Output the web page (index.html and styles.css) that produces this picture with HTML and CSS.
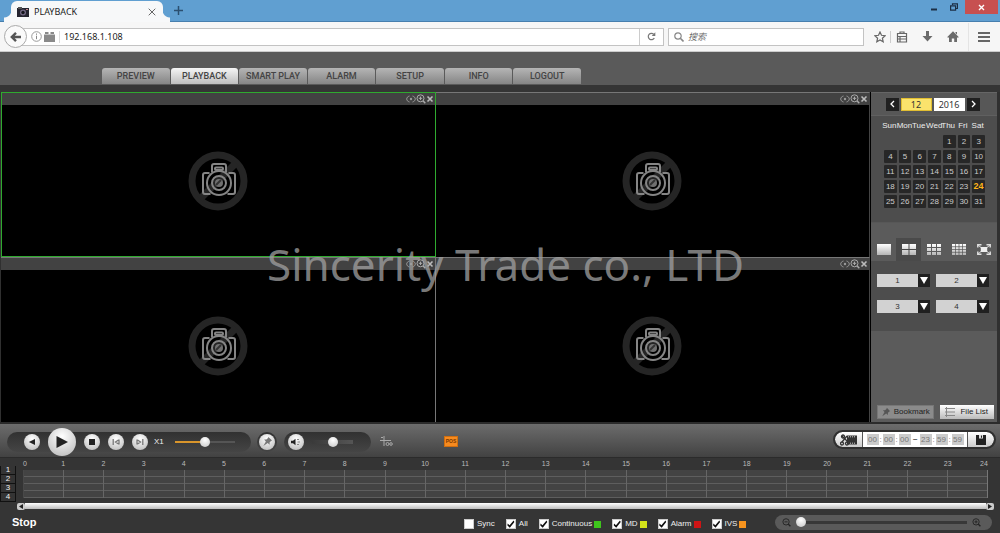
FILE: index.html
```html
<!DOCTYPE html>
<html lang="en">
<head>
<meta charset="utf-8">
<title>PLAYBACK</title>
<link rel="stylesheet" href="styles.css">
</head>
<body>
<svg class="defs" aria-hidden="true">
  <defs>
    <linearGradient id="shine" x1="0" y1="0" x2="0" y2="1"><stop offset="0" stop-color="#fff"/><stop offset="1" stop-color="#b5b5b5"/></linearGradient>
  </defs>
  <symbol id="camera" viewBox="0 0 60 60">
    <circle cx="30" cy="30" r="26" fill="none" stroke="#252525" stroke-width="7"/>
    <path d="M12 48L48 12" stroke="#252525" stroke-width="7"/>
    <g fill="none" stroke="#858585" stroke-width="2">
      <path d="M21.500 22H17Q15 22 15 24V41Q15 43 17 43H22.500M40.500 22H45Q47 22 47 24V41Q47 43 45 43H39.500"/>
      <path d="M24 21.500V15Q24 13 26 13H36Q38 13 38 15V21.500"/>
      <rect x="27" y="16.500" width="8" height="2.500" rx="1"/>
      <circle cx="31" cy="32" r="12"/>
      <circle cx="31" cy="32" r="7"/>
    </g>
    <circle cx="31" cy="32" r="4" fill="#707070"/>
    <path d="M28 34l5-5" stroke="#333" stroke-width="2"/>
  </symbol>
  <symbol id="eye" viewBox="0 0 10 10"><path d="M3.500 2C-.2 3 -.2 7 3.500 8M6.500 2C10.200 3 10.200 7 6.500 8" fill="none" stroke="#999"/><circle cx="5" cy="5" r="1.200" fill="#999"/></symbol>
  <symbol id="zoomin" viewBox="0 0 10 10"><g fill="none" stroke="currentColor"><circle cx="4.500" cy="4.300" r="3.500"/><path d="M7 6.800L9.300 9.200" stroke-width="1.500"/><path d="M2.800 4.300h3.400M4.500 2.600v3.400"/></g></symbol>
  <symbol id="zoomout" viewBox="0 0 10 10"><g fill="none" stroke="currentColor"><circle cx="4.500" cy="4.300" r="3.500"/><path d="M7 6.800L9.300 9.200" stroke-width="1.500"/><path d="M2.800 4.300h3.400"/></g></symbol>
  <symbol id="cross" viewBox="0 0 8 8"><path d="M1.500 1.500l5 5M6.500 1.500l-5 5" stroke="#bbb" stroke-width="1.600"/></symbol>
  <symbol id="pin" viewBox="0 0 12 12"><path d="M7 1l4 4-1.200.4-1.600 1.800.2 2.300-2.200-1.800L1.500 11 4.200 6 2.300 3.800l2.500.1L6.600 2.300z" fill="currentColor"/></symbol>
</svg>

<div class="browser">
  <div class="tabstrip">
    <div class="tab">
      <svg class="favicon" viewBox="0 0 12 10"><rect y="1" width="12" height="9" fill="#25242f"/><rect width="4" height="2" x="1" fill="#555"/><circle cx="6" cy="5.500" r="3" fill="#746a85"/><circle cx="6" cy="5.500" r="1.700" fill="#15151c"/><rect x="9" y="2" width="2" height="1" fill="#c88"/></svg>
      <span class="tab-title">PLAYBACK</span>
      <button class="plain" aria-label="Close tab"><svg width="8" height="8" viewBox="0 0 8 8"><path d="M.7.7l6.600 6.600M7.300.7L.7 7.300" stroke="#666"/></svg></button>
    </div>
    <button class="plain newtab" aria-label="New tab"><svg width="9" height="9" viewBox="0 0 9 9"><path d="M4.500 0v9M0 4.500h9" stroke="#2b4f70" stroke-width="1.500"/></svg></button>
    <div class="window-buttons">
      <button class="plain" aria-label="Minimize"><svg width="7" height="8" viewBox="0 0 7 8"><path d="M0 6.500h6" stroke="#1c2f45" stroke-width="2"/></svg></button>
      <button class="plain" aria-label="Restore"><svg width="8" height="8" viewBox="0 0 8 8"><path d="M2.500 2V.8h5v4.700H6M.6 2.800h5v4.400h-5z" fill="none" stroke="#1c2f45" stroke-width="1.200"/></svg></button>
      <button class="plain close" aria-label="Close"><svg width="7" height="7" viewBox="0 0 7 7"><path d="M1 1l5 5M6 1L1 6" stroke="#fff" stroke-width="1.400"/></svg></button>
    </div>
  </div>
  <div class="toolbar">
    <button class="plain back" aria-label="Back"><svg width="12" height="12" viewBox="0 0 12 12"><path d="M11 6H2.500M6 1.800L1.800 6 6 10.200" fill="none" stroke="#555" stroke-width="2.400"/></svg></button>
    <div class="address">
      <svg width="11" height="11" viewBox="0 0 11 11"><circle cx="5.500" cy="5.500" r="4.800" fill="none" stroke="#999"/><path d="M5.500 4.700v3.500M5.500 2.500v1.300" stroke="#888"/></svg>
      <svg width="11" height="10" viewBox="0 0 11 10"><path d="M0 2.500h11V10H0zM1 0h3.500v2H1zM6.500 0H10v2H6.500z" fill="#8a8a8a"/></svg>
      <input class="url" aria-label="Address" value="192.168.1.108">
      <button class="plain reload" aria-label="Reload"><svg width="9" height="9" viewBox="0 0 9 9"><path d="M7.300 6A3.200 3.200 0 1 1 6.800 2.300" fill="none" stroke="#777" stroke-width="1.200"/><path d="M8.300.3v3.700H4.700z" fill="#777"/></svg></button>
    </div>
    <div class="search">
      <svg width="10" height="10" viewBox="0 0 10 10"><circle cx="4" cy="4" r="3.200" fill="none" stroke="#888" stroke-width="1.200"/><path d="M6.300 6.300L9.500 9.500" stroke="#888" stroke-width="1.600"/></svg>
      <input aria-label="Search" placeholder="搜索">
    </div>
    <div class="tools">
      <button class="plain" aria-label="Bookmark page"><svg width="12" height="12" viewBox="0 0 12 12"><path d="M6 1l1.500 3.300 3.600.4-2.700 2.500.8 3.600L6 9l-3.200 1.800.8-3.600L.9 4.700l3.600-.4z" fill="none" stroke="#666" stroke-width="1.200"/></svg></button>
      <button class="plain split" aria-label="Library"><svg width="12" height="12" viewBox="0 0 12 12"><path d="M1.500 2.500h9v8.500h-9zM4 2.500V1h4v1.500M1.500 5.500h9M1.500 8h9M4 5v6" fill="none" stroke="#666" stroke-width="1.200"/></svg></button>
      <button class="plain" aria-label="Downloads"><svg width="11" height="11" viewBox="0 0 11 11"><path d="M4 0h3v5h3.500l-5 5.500-5-5.500H4z" fill="#6b6b6b"/></svg></button>
      <button class="plain" aria-label="Home"><svg width="12" height="11" viewBox="0 0 12 11"><path d="M6 .3L11.700 6l-.8.900L10 6v5H7.200V7.500H4.800V11H2V6l-.9.900L.3 6zM8.500 1H10v2.500L8.500 2z" fill="#6b6b6b"/></svg></button>
      <button class="plain menu" aria-label="Menu"><svg width="12" height="10" viewBox="0 0 12 10"><path d="M0 1h12M0 5h12M0 9h12" stroke="#666" stroke-width="1.800"/></svg></button>
    </div>
  </div>
</div>

<header class="header">
  <nav class="nav">
    <a href="#preview">PREVIEW</a><a href="#playback" class="active">PLAYBACK</a><a href="#smart">SMART PLAY</a><a href="#alarm">ALARM</a><a href="#setup">SETUP</a><a href="#info">INFO</a><a href="#logout">LOGOUT</a>
  </nav>
</header>

<main class="main">
  <section class="videos" aria-label="Video channels">
    <div class="video selected">
      <div class="video-bar"><svg><use href="#eye"/></svg><svg><use href="#zoomin"/></svg><svg class="x"><use href="#cross"/></svg></div>
      <div class="video-body"><svg class="camera"><use href="#camera"/></svg></div>
    </div>
    <div class="video">
      <div class="video-bar"><svg><use href="#eye"/></svg><svg><use href="#zoomin"/></svg><svg class="x"><use href="#cross"/></svg></div>
      <div class="video-body"><svg class="camera"><use href="#camera"/></svg></div>
    </div>
    <div class="video">
      <div class="video-bar"><svg><use href="#eye"/></svg><svg><use href="#zoomin"/></svg><svg class="x"><use href="#cross"/></svg></div>
      <div class="video-body"><svg class="camera"><use href="#camera"/></svg></div>
    </div>
    <div class="video">
      <div class="video-bar"><svg><use href="#eye"/></svg><svg><use href="#zoomin"/></svg><svg class="x"><use href="#cross"/></svg></div>
      <div class="video-body"><svg class="camera"><use href="#camera"/></svg></div>
    </div>
  </section>

  <aside class="sidebar">
    <div class="date-head">
      <button class="plain step" aria-label="Previous month"><svg width="5" height="8" viewBox="0 0 5 8"><path d="M4 1L1 4l3 3" fill="none" stroke="#fff" stroke-width="1.300"/></svg></button>
      <input class="month" aria-label="Month" value="12">
      <input aria-label="Year" value="2016">
      <button class="plain step" aria-label="Next month"><svg width="5" height="8" viewBox="0 0 5 8"><path d="M1 1l3 3-3 3" fill="none" stroke="#fff" stroke-width="1.300"/></svg></button>
    </div>
    <div class="calendar-panel">
      <table class="calendar">
        <thead><tr><th>Sun</th><th>Mon</th><th>Tue</th><th>Wed</th><th>Thu</th><th>Fri</th><th>Sat</th></tr></thead>
        <tbody>
          <tr><td class="empty" colspan="4"></td><td>1</td><td>2</td><td>3</td></tr>
          <tr><td>4</td><td>5</td><td>6</td><td>7</td><td>8</td><td>9</td><td>10</td></tr>
          <tr><td>11</td><td>12</td><td>13</td><td>14</td><td>15</td><td>16</td><td>17</td></tr>
          <tr><td>18</td><td>19</td><td>20</td><td>21</td><td>22</td><td>23</td><td class="today">24</td></tr>
          <tr><td>25</td><td>26</td><td>27</td><td>28</td><td>29</td><td>30</td><td>31</td></tr>
        </tbody>
      </table>
    </div>
    <div class="layouts">
      <button class="plain" aria-label="Single view"><svg width="14" height="11" viewBox="0 0 14 11"><rect width="14" height="11" fill="url(#shine)"/></svg></button>
      <button class="plain on" aria-label="Four views"><svg width="14" height="11" viewBox="0 0 14 11"><path d="M0 0h6.500v5H0zM7.500 0H14v5H7.500zM0 6h6.500v5H0zM7.500 6H14v5H7.500z" fill="url(#shine)"/></svg></button>
      <button class="plain" aria-label="Nine views"><svg width="14" height="11" viewBox="0 0 14 11"><path d="M0 0h4v3H0zM5 0h4v3H5zM10 0h4v3h-4zM0 4h4v3H0zM5 4h4v3H5zM10 4h4v3h-4zM0 8h4v3H0zM5 8h4v3H5zM10 8h4v3h-4z" fill="url(#shine)"/></svg></button>
      <button class="plain" aria-label="Sixteen views"><svg width="14" height="11" viewBox="0 0 14 11"><rect width="14" height="11" fill="url(#shine)"/><path d="M3.500 0v11M7 0v11M10.500 0v11M0 2.700h14M0 5.500h14M0 8.300h14" stroke="#555" stroke-width=".7"/></svg></button>
      <button class="plain" aria-label="Full screen"><svg width="14" height="11" viewBox="0 0 14 11"><path d="M.8 3.500V.8H4.500M9.500.8h3.700v2.700M.8 7.500v2.700h3.700M9.500 10.200h3.700V7.500" fill="none" stroke="#ddd" stroke-width="1.500"/><path d="M1 1l3 2.500M13 1l-3 2.500M1 10l3-2.500M13 10l-3-2.500" stroke="#ddd"/><rect x="3.800" y="3" width="6.400" height="5" fill="#eee"/></svg></button>
    </div>
    <div class="channels">
      <div class="pick"><select aria-label="Window 1"><option>1</option></select></div>
      <div class="pick"><select aria-label="Window 2"><option>2</option></select></div>
      <div class="pick"><select aria-label="Window 3"><option>3</option></select></div>
      <div class="pick"><select aria-label="Window 4"><option>4</option></select></div>
    </div>
    <div class="side-actions">
      <button class="bookmark"><svg width="10" height="10"><use href="#pin"/></svg>Bookmark</button>
      <button class="filelist"><svg width="10" height="10" viewBox="0 0 10 10"><path d="M1.500 0v10M0 1.500h10M0 5h10M0 8.500h10" stroke="#888"/></svg>File List</button>
    </div>
  </aside>
  <div class="watermark">Sincerity Trade co., LTD</div>
</main>

<section class="controls" aria-label="Playback controls">
  <div class="pill transport">
    <button class="round" aria-label="Reverse"><svg width="8" height="8" viewBox="0 0 8 8"><path d="M7 1v6L.8 4z" fill="#222"/></svg></button>
    <button class="round play" aria-label="Play"><svg width="14" height="14" viewBox="0 0 14 14"><path d="M1.500 1v12L13 7z" fill="#222"/></svg></button>
    <button class="round" aria-label="Stop"><svg width="6" height="6"><rect width="6" height="6" fill="#222"/></svg></button>
    <button class="round" aria-label="Previous frame"><svg width="8" height="8" viewBox="0 0 8 8"><path d="M1.200 1v6M7 1.500v5M6.500 2L3.500 4l3 2" fill="none" stroke="#777" stroke-width="1.300"/></svg></button>
    <button class="round" aria-label="Next frame"><svg width="8" height="8" viewBox="0 0 8 8"><path d="M6.800 1v6M1 1.500v5M1.500 2l3 2-3 2" fill="none" stroke="#777" stroke-width="1.300"/></svg></button>
    <label for="speed">X1</label>
    <input id="speed" class="speed" type="range" value="50">
  </div>
  <div class="pill pinwrap"><button class="round" aria-label="Pin"><svg width="11" height="11"><use href="#pin"/></svg></button></div>
  <div class="pill volume">
    <button class="round" aria-label="Mute"><svg width="10" height="8" viewBox="0 0 10 8"><path d="M0 2.800h2L4.500.7v6.600L2 5.200H0z" fill="#222"/><path d="M6 1.500h2M6.500 4H9M6 6.500h2" stroke="#888"/></svg></button>
    <input class="vol" type="range" aria-label="Volume" value="50">
  </div>
  <button class="plain rule" aria-label="Display rules"><svg width="13" height="11" viewBox="0 0 13 11"><path d="M0 4.500h11M4 0v10M1 1.500h2" fill="none" stroke="#aaa"/><circle cx="7.500" cy="8" r="1.500" fill="none" stroke="#aaa"/><circle cx="11" cy="8" r="1.300" fill="none" stroke="#aaa"/></svg></button>
  <button class="pos">POS</button>
  <div class="clip">
    <button class="plain" aria-label="Clip"><svg width="18" height="12" viewBox="0 0 18 12"><path d="M7 1.500h10v9H7z" fill="#333"/><path d="M8 2.800h8M8 9.200h8" stroke="#ccc" stroke-dasharray="1 1"/><g fill="none" stroke="#333" stroke-width="1.300"><path d="M2 2l6 6M7 2L2 8"/><circle cx="2" cy="9.500" r="1.500"/><circle cx="7" cy="9.500" r="1.500"/><circle cx="3" cy="2.500" r="1.500"/></g></svg></button>
    <div class="times">
      <input aria-label="Start hour" value="00"><i>:</i><input aria-label="Start minute" value="00"><i>:</i><input aria-label="Start second" value="00"><b>~</b><input aria-label="End hour" value="23"><i>:</i><input aria-label="End minute" value="59"><i>:</i><input aria-label="End second" value="59">
    </div>
    <button class="plain save" aria-label="Save clip"><svg width="10" height="10" viewBox="0 0 10 10"><path d="M0 0h10v10H0z" fill="#222"/><path d="M3 0h4v3.500H3z" fill="#ddd"/><path d="M5.500.5v2.300" stroke="#222"/></svg></button>
  </div>
</section>

<section class="timeline" aria-label="Timeline">
  <ol class="rows"><li>1</li><li>2</li><li>3</li><li>4</li></ol>
  <div class="track">
    <div class="hours">
      <span class="first">0</span><span>1</span><span>2</span><span>3</span><span>4</span><span>5</span><span>6</span><span>7</span><span>8</span><span>9</span><span>10</span><span>11</span><span>12</span><span>13</span><span>14</span><span>15</span><span>16</span><span>17</span><span>18</span><span>19</span><span>20</span><span>21</span><span>22</span><span>23</span><span class="last">24</span>
    </div>
    <div class="grid">
      <div></div><div></div><div></div><div></div><div></div><div></div><div></div><div></div><div></div><div></div><div></div><div></div><div></div><div></div><div></div><div></div><div></div><div></div><div></div><div></div><div></div><div></div><div></div><div></div>
    </div>
  </div>
</section>
<div class="scroll">
  <button aria-label="Scroll left"><svg width="4" height="5" viewBox="0 0 4 5"><path d="M4 0v5L0 2.500z" fill="#222"/></svg></button>
  <div class="scroll-thumb"></div>
  <button aria-label="Scroll right"><svg width="4" height="5" viewBox="0 0 4 5"><path d="M0 0v5l4-2.500z" fill="#222"/></svg></button>
</div>

<footer class="footer">
  <strong>Stop</strong>
  <div class="filters">
    <label><input type="checkbox">Sync</label>
    <label><input type="checkbox" checked>All</label>
    <label><input type="checkbox" checked>Continuous<span class="swatch green"></span></label>
    <label><input type="checkbox" checked>MD<span class="swatch yellow"></span></label>
    <label><input type="checkbox" checked>Alarm<span class="swatch red"></span></label>
    <label><input type="checkbox" checked>IVS<span class="swatch orange"></span></label>
  </div>
  <div class="zoom">
    <svg width="9" height="9"><use href="#zoomout"/></svg>
    <input type="range" aria-label="Timeline zoom" value="0">
    <svg width="9" height="9"><use href="#zoomin"/></svg>
  </div>
</footer>
</body>
</html>
```

FILE: styles.css
```css
* { box-sizing: border-box; }
body {
  margin: 0;
  min-height: 100vh;
  display: flex;
  flex-direction: column;
  background: #353535;
  color: #eee;
  font: 8px/10px "Liberation Sans", Arial, sans-serif;
}
svg { display: block; flex: none; }
.defs { position: absolute; width: 0; height: 0; }
button, input, select { font: inherit; color: inherit; margin: 0; padding: 0; border: 0; border-radius: 0; min-width: 0; }
.plain { background: none; display: flex; align-items: center; justify-content: center; }

/* Browser window */
.tabstrip { display: flex; height: 22px; background: #609fd1; border-bottom: 1px solid #477fae; }
.tab {
  display: flex; align-items: center; gap: 5px;
  width: 152px; height: 21px; margin: 1px 0 0 11px; padding: 0 7px 0 6px;
  background: #f7f8f9; border-radius: 6px 6px 0 0;
  position: relative;
}
.tab::before, .tab::after {
  content: ""; position: absolute; bottom: 0; width: 7px; height: 12px;
}
.tab::before { right: 100%; background: radial-gradient(circle at 0 0, transparent 7px, #f7f8f9 8px); }
.tab::after { left: 100%; background: radial-gradient(circle at 100% 0, transparent 7px, #f7f8f9 8px); }
.favicon { width: 12px; height: 10px; }
.tab-title { flex: 1; color: #222; font: 9px/12px "Noto Sans", sans-serif; }
.newtab { margin-left: 11px; }
.window-buttons { display: flex; margin-left: auto; height: 14px; gap: 12px; padding-right: 2px; }
.window-buttons .close { width: 33px; background: #c75050; margin-left: -5px; }
.toolbar {
  display: flex; align-items: center; height: 30px; padding: 0 10px 0 4px;
  background: #f6f6f6; border-bottom: 1px solid #ccc;
}
.back { width: 23px; height: 23px; border: 1px solid #aaa; border-radius: 50%; background: #fafafa; z-index: 1; }
.address, .search { display: flex; align-items: center; height: 18px; background: #fff; border: 1px solid #c3c3c3; color: #222; }
.address { flex: 1; margin-left: -5px; padding-left: 8px; gap: 2px; font: 9px/12px "Noto Sans", sans-serif; }
.url { flex: 1; height: 12px; margin-left: 2px; padding-left: 4px; border-left: 1px solid #ddd; }
.reload { width: 24px; height: 16px; border-left: 1px solid #ccc; }
.search { width: 196px; margin-left: 4px; padding: 0 5px; gap: 4px; font: italic 9px/12px "Noto Sans", "Noto Sans CJK SC", sans-serif; }
.search input { flex: 1; background: none; }
.search input::placeholder { color: #666; }
.tools { display: flex; align-items: center; gap: 14px; margin-left: 10px; }
.tools .split { margin-left: -10px; padding-left: 5px; border-left: 1px solid #ccc; }
.tools .menu { height: 28px; padding-left: 9px; border-left: 1px solid #e4e4e4; margin-left: -5px; }

/* Header */
.header { height: 40px; padding-top: 16px; background: linear-gradient(#5a5a5a 33px, #353535 33px); }
.nav { display: flex; gap: 1px; width: 479px; margin-left: 102px; }
.nav a {
  flex: 1; height: 16px; border-radius: 3px 3px 0 0; text-align: center; text-decoration: none;
  background: linear-gradient(#b5b5b5, #858585); color: #444; font: 500 9px/16px Roboto, sans-serif;
}
.nav .active { background: linear-gradient(#f5f5f5, #bdbdbd); }

/* Main */
.main { flex: 1; display: flex; position: relative; padding: 0 3px 0 1px; background: #303030; min-height: 330px; }
.videos { flex: 1; display: grid; grid-template: 1fr 1fr / 1fr 1fr; background: #000; border-right: 1px solid #000; }
.video { display: flex; flex-direction: column; background: #000; border: solid #777; border-width: 1px 1px 0 0; }
.video:nth-child(2n) { border-right-color: #444; }
.video.selected { border: 1px solid #2faa2f; }
.video-bar { display: flex; align-items: center; justify-content: flex-end; height: 12px; background: #424242; color: #aaa; padding-right: 1px; }
.video-bar svg { width: 10px; height: 10px; }
.video-bar .x { width: 8px; height: 8px; }
.video-body { flex: 1; display: flex; align-items: center; justify-content: center; }
.camera { width: 60px; height: 60px; }
.watermark {
  position: absolute; inset: 148px 0 auto 267px;
  color: rgba(160, 160, 160, .75); font: 44px/48px "Noto Sans", sans-serif; white-space: nowrap; pointer-events: none;
}

/* Sidebar */
.sidebar { width: 126px; display: flex; flex-direction: column; background: #5b5b5b; border-top: 1px solid #666; }
.date-head { display: flex; align-items: center; justify-content: center; gap: 2px; height: 23px; padding-right: 3px; background: #575757; border-bottom: 1px solid #606060; }
.date-head input { width: 31px; height: 13px; background: #fff; color: #333; text-align: center; font: 9px/12px "Noto Sans", sans-serif; }
.date-head .month { background: #fbe36c; border: 1px solid #e0bd32; }
.step { width: 13px; height: 13px; background: #202020; }
.calendar-panel { height: 107px; padding: 0 11px; background: #4d4d4d; border-bottom: 1px solid #575757; }
.calendar { width: 105px; table-layout: fixed; border-spacing: 2px; }
.calendar th { padding: 0; height: 15px; font-weight: normal; text-align: center; white-space: nowrap; text-indent: -2px; }
.calendar td { height: 13px; padding: 0; background: #272727; border-radius: 1px; text-align: center; color: #ccc; line-height: 9px; }
.calendar .empty { background: none; }
.calendar .today { color: #ffb417; font-weight: bold; font-size: 9px; }
.layouts { display: flex; margin-top: 15px; height: 23px; }
.layouts button { flex: 1; }
.layouts .on { background: #4a4a4a; }
.channels { display: grid; grid-template-columns: 53px 53px; gap: 13px 6px; height: 70px; padding: 13px 6px; align-content: start; background: #4d4d4d; }
.pick { position: relative; display: flex; height: 13px; background: #d2d2d2; border-right: 12px solid #202020; }
.pick select { width: 100%; appearance: none; background: none; color: #333; text-align-last: center; }
.pick::after { content: ""; position: absolute; right: -10px; top: 3px; border: solid transparent; border-width: 7px 4px 0; border-top-color: #fff; pointer-events: none; }
.side-actions { display: flex; gap: 6px; margin: auto 3px 3px 6px; }
.side-actions button { flex: 1; height: 14px; display: flex; align-items: center; justify-content: center; gap: 3px; color: #222; white-space: nowrap; }
.side-actions .bookmark { background: #8b8b8b; border: 1px solid #777; }
.bookmark svg { color: #555; }
.side-actions .filelist { gap: 5px; background: linear-gradient(#fff, #bbb); }

/* Playback controls */
.controls { display: flex; align-items: center; height: 36px; padding: 2px 6px 0 7px; background: linear-gradient(#6c6c6c, #424242); border-top: 2px solid #2b2b2b; border-bottom: 1px solid #2b2b2b; }
.pill { display: flex; align-items: center; height: 20px; border-radius: 10px; background: linear-gradient(#313131, #454545); }
.transport { width: 244px; padding-left: 17px; gap: 8px; }
.round { display: flex; align-items: center; justify-content: center; flex: none; width: 16px; height: 16px; border-radius: 50%; background: radial-gradient(circle at 50% 30%, #fff, #b5b5b5); color: #777; }
.play { width: 28px; height: 28px; }
.transport label { width: 11px; margin: 0 2px 0 -2px; }
input[type=range] { appearance: none; height: 12px; background: linear-gradient(#555, #555) center / 100% 2px no-repeat; }
input[type=range]::-webkit-slider-thumb { appearance: none; width: 10px; height: 10px; border-radius: 50%; background: radial-gradient(circle at 50% 30%, #fff, #c5c5c5); }
input.speed { width: 60px; background: linear-gradient(90deg, #d9952b 50%, #555 50%) center / 100% 2px no-repeat; }
.pinwrap { width: 20px; margin-left: 6px; justify-content: center; }
.volume { width: 87px; margin-left: 7px; padding-left: 4px; gap: 8px; }
input.vol { width: 41px; background: linear-gradient(90deg, #3a3a3a, #555) center / 100% 4px no-repeat; }
.rule { margin-left: 9px; }
.pos { margin-left: 51px; width: 14px; height: 11px; background: #f78b1f; color: #7a3900; font: bold 5px/9px "Liberation Sans", Arial, sans-serif; border: 1px solid #d06f10; }
.clip { display: flex; width: 159px; height: 15px; margin: -4px 0 0 auto; border-radius: 8px; overflow: hidden; background: linear-gradient(#fff, #ccc); outline: 2px solid #303030; }
.clip > button { width: 27px; }
.clip > .save { width: 26px; }
.times { flex: 1; display: flex; align-items: center; justify-content: center; gap: 1px; border: solid #555; border-width: 0 1px; background: #fff; color: #777; }
.times input { width: 12px; height: 11px; background: #cbcbcb; color: #777; text-align: center; }
.times i { width: 2px; font-style: normal; }
.times b { width: 7px; text-align: center; color: #444; }

/* Timeline */
.timeline { display: flex; height: 43px; padding-right: 12px; background: #343434; }
.rows { list-style: none; width: 16px; margin: 8px 7px 0 0; padding: 0; }
.rows li { height: 9px; line-height: 8px; text-align: center; border: 1px solid #111; border-top: 0; }
.track { flex: 1; }
.hours { display: flex; justify-content: space-between; height: 12px; line-height: 12px; font-size: 7px; color: #bbb; }
.hours span { width: 0; display: flex; justify-content: center; }
.hours .first { justify-content: flex-start; }
.hours .last { justify-content: flex-end; }
.grid {
  display: flex; height: 28px; border-right: 1px solid #777;
  background: repeating-linear-gradient(#434343 0 6px, #5e5e5e 6px 7px);
}
.grid div { flex: 1; border-left: 1px solid #666; }
.grid div:first-child { border-color: #484848; }
.scroll { display: flex; align-items: center; height: 10px; padding: 0 6px 0 17px; }
.scroll button { width: 8px; height: 7px; display: flex; align-items: center; justify-content: center; background: #ccc; border-radius: 2px; }
.scroll-thumb { flex: 1; height: 6px; background: linear-gradient(#fff, #bbb); }

/* Footer */
.footer { display: flex; align-items: center; height: 22px; padding: 0 8px 0 12px; }
.footer strong { width: 452px; font-size: 11px; line-height: 14px; color: #fff; }
.filters { display: flex; gap: 11px; padding-top: 4px; }
.filters label { display: flex; align-items: center; gap: 2px; white-space: nowrap; }
.filters input { appearance: none; width: 10px; height: 10px; margin-right: 1px; background: #fff; border: 1px solid #ccc; display: flex; }
.filters input:checked::before { content: ""; width: 8px; height: 8px; background: #111; clip-path: polygon(10% 45%, 35% 65%, 85% 5%, 95% 25%, 38% 98%, 8% 70%); }
.swatch { width: 7px; height: 7px; }
.green { background: #3fc51c; }
.yellow { background: #d5e31a; }
.red { background: #cf1414; }
.orange { background: #f7941e; }
.zoom { display: flex; align-items: center; gap: 5px; width: 217px; height: 15px; margin-left: auto; padding: 0 11px 0 7px; border-radius: 8px; background: #5a5a5a; color: #222; }
.zoom input { flex: 1; background: linear-gradient(#383838, #383838) center / 100% 3px no-repeat; }
```
